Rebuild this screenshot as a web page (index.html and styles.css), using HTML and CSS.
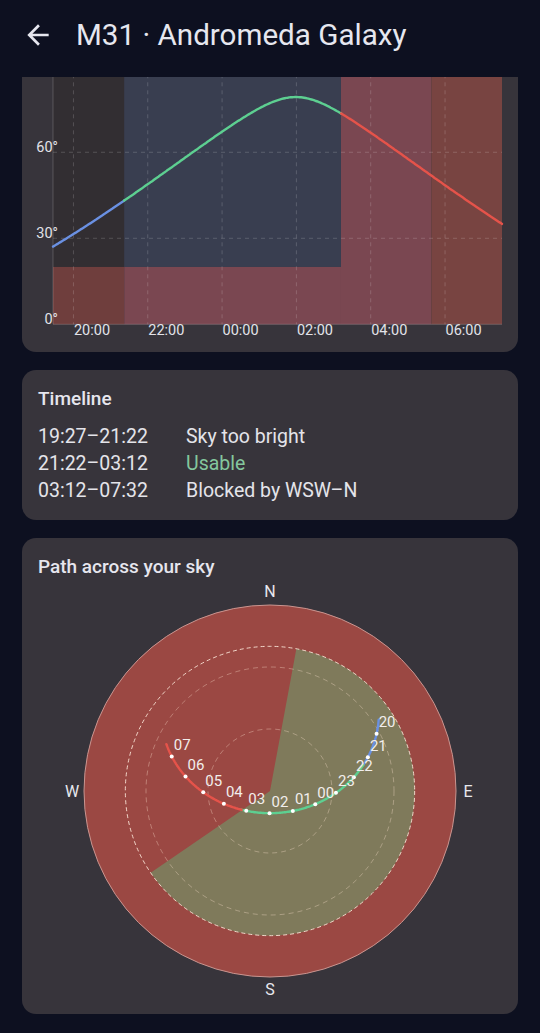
FILE: index.html
```html
<!DOCTYPE html>
<html lang="en">
<head>
  <meta charset="UTF-8">
  <meta name="viewport" content="width=device-width, initial-scale=1.0">
  <title>M31 · Andromeda Galaxy</title>
  <link rel="stylesheet" href="styles.css">
</head>
<body>
  <header class="topbar">
    <button class="back" aria-label="Back">
      <svg viewBox="0 0 24 24"><path d="M20 11H7.83l5.59-5.59L12 4l-8 8 8 8 1.41-1.41L7.83 13H20v-2z"/></svg>
    </button>
    <h1>M31 · Andromeda Galaxy</h1>
  </header>

  <main class="content">
    <div class="scroll">
      <!-- Altitude over the night -->
      <section class="card chart-card">
        <svg id="altChart" class="alt-chart" width="496" height="306" viewBox="0 0 496 306"></svg>
      </section>

      <!-- Timeline -->
      <section class="card">
        <h2>Timeline</h2>
        <div class="timeline">
          <span>19:27–21:22</span><span>Sky too bright</span>
          <span>21:22–03:12</span><span class="usable">Usable</span>
          <span>03:12–07:32</span><span>Blocked by WSW–N</span>
        </div>
      </section>

      <!-- Sky path -->
      <section class="card">
        <h2>Path across your sky</h2>
        <svg id="skyPlot" class="sky-plot" width="464" height="419" viewBox="0 0 464 419"></svg>
      </section>
    </div>
  </main>

  <script>
    const RAD = Math.PI / 180;
    const LAT = 52 * RAD;
    const DEC = 41.27 * RAD;
    const TRANSIT = 25.98;   // 01:59, hours counted from the evening's midnight
    const START = 19.45;     // 19:27
    const END = 31.533;      // 07:32
    const DARK = 21.367;     // 21:22
    const BLOCKED = 27.2;    // 03:12
    const DAWN = 29.633;     // 05:38

    const BLUE = '#6a90e2', GREEN = '#5dcf91', RED = '#e5534a';

    function position(t) {
      const h = (t - TRANSIT) * 15 * RAD;
      const sinAlt = Math.sin(LAT) * Math.sin(DEC) + Math.cos(LAT) * Math.cos(DEC) * Math.cos(h);
      const alt = Math.asin(sinAlt);
      let cosAz = (Math.sin(DEC) - sinAlt * Math.sin(LAT)) / (Math.cos(alt) * Math.cos(LAT));
      cosAz = Math.max(-1, Math.min(1, cosAz));
      let az = Math.acos(cosAz) / RAD;
      if (h > 0) az = 360 - az;
      return { alt: alt / RAD, az: az };
    }

    function segments(toXY) {
      const parts = [[START, DARK, BLUE], [DARK, BLOCKED, GREEN], [BLOCKED, END, RED]];
      return parts.map(([a, b, color]) => {
        const pts = [];
        for (let t = a; t < b; t += 0.04) pts.push(toXY(t));
        pts.push(toXY(b));
        const d = 'M' + pts.map(p => p[0].toFixed(1) + ' ' + p[1].toFixed(1)).join(' L');
        return `<path d="${d}" fill="none" stroke="${color}" stroke-width="2.4" stroke-linecap="round"/>`;
      }).join('');
    }

    // Altitude chart
    function drawChart() {
      const left = 31, right = 480, top = 20.3, bottom = 278.3;
      const x = t => left + (t - START) * (right - left) / (END - START);
      const y = alt => bottom - alt * 2.867;
      const band = y(20);
      let s = '';

      s += `<rect x="${left}" y="${top}" width="${x(DARK) - left}" height="${band - top}" fill="#322e32"/>`;
      s += `<rect x="${left}" y="${band}" width="${x(DARK) - left}" height="${bottom - band}" fill="#6f3e3d"/>`;
      s += `<rect x="${x(DARK)}" y="${top}" width="${x(BLOCKED) - x(DARK)}" height="${band - top}" fill="#393e50"/>`;
      s += `<rect x="${x(DARK)}" y="${band}" width="${x(BLOCKED) - x(DARK)}" height="${bottom - band}" fill="#7a4751"/>`;
      s += `<rect x="${x(BLOCKED)}" y="${top}" width="${x(DAWN) - x(BLOCKED)}" height="${bottom - top}" fill="#7a4751"/>`;
      s += `<rect x="${x(DAWN)}" y="${top}" width="${right - x(DAWN)}" height="${bottom - top}" fill="#784441"/>`;

      for (let t = 20; t <= 30; t += 2) {
        s += `<line class="grid" x1="${x(t)}" y1="${top}" x2="${x(t)}" y2="${bottom}"/>`;
        const label = String(t % 24).padStart(2, '0') + ':00';
        s += `<text class="tick" x="${x(t) + 0.5}" y="${bottom + 11}">${label}</text>`;
      }
      [30, 60, 90].forEach(a => {
        s += `<line class="grid" x1="${left}" y1="${y(a)}" x2="${right}" y2="${y(a)}"/>`;
      });
      s += `<line class="axis" x1="${left}" y1="${top}" x2="${left}" y2="${bottom}"/>`;
      s += `<line class="axis" x1="${left}" y1="${bottom}" x2="${right}" y2="${bottom}"/>`;
      [0, 30, 60].forEach(a => {
        s += `<text class="tick" x="36" y="${y(a) - 0.5}" text-anchor="end">${a}°</text>`;
      });

      s += segments(t => [x(t), y(position(t).alt)]);
      document.getElementById('altChart').innerHTML = s;
    }

    // Polar sky plot, north up, east right
    function drawSky() {
      const cx = 232, cy = 212, R = 186;
      const r = alt => R * (90 - alt) / 90;
      const pt = (az, rad) => [cx + rad * Math.sin(az * RAD), cy - rad * Math.cos(az * RAD)];
      const horizon = r(20);
      const a = pt(10.5, horizon), b = pt(235.6, horizon);
      let s = '';

      s += `<circle cx="${cx}" cy="${cy}" r="${R}" fill="#9b4843" stroke="#c99590" stroke-width="1"/>`;
      s += `<path d="M${cx} ${cy} L${a[0]} ${a[1]} A${horizon} ${horizon} 0 1 1 ${b[0]} ${b[1]} Z" fill="#7f7a5b"/>`;
      s += `<circle class="ring" cx="${cx}" cy="${cy}" r="${r(30)}"/>`;
      s += `<circle class="ring" cx="${cx}" cy="${cy}" r="${r(60)}"/>`;
      s += `<circle class="ring limit" cx="${cx}" cy="${cy}" r="${horizon}"/>`;

      s += segments(t => {
        const p = position(t);
        return pt(p.az, r(p.alt));
      });

      for (let h = 20; h <= 31; h++) {
        const p = position(h);
        const [px, py] = pt(p.az, r(p.alt));
        s += `<circle cx="${px}" cy="${py}" r="2" fill="#fff"/>`;
        s += `<text class="hour" x="${px + 10.5}" y="${py - 11.5}">${String(h % 24).padStart(2, '0')}</text>`;
      }

      s += `<text class="compass" x="${cx}" y="12">N</text>`;
      s += `<text class="compass" x="${cx}" y="410">S</text>`;
      s += `<text class="compass" x="34" y="${cy}">W</text>`;
      s += `<text class="compass" x="430" y="${cy}">E</text>`;
      document.getElementById('skyPlot').innerHTML = s;
    }

    drawChart();
    drawSky();
  </script>
</body>
</html>
```

FILE: styles.css
```css
body {
  margin: 0;
  background-color: #0d1020;
  color: #e6e7ef;
  font-family: Roboto, "Noto Sans", sans-serif;
}
.topbar {
  height: 77px;
  display: flex;
  align-items: flex-start;
  padding: 17px 0 0 22px;
  box-sizing: border-box;
}
.back {
  width: 32px;
  height: 32px;
  margin-top: 2px;
  padding: 0;
  border: 0;
  background: none;
}
.back svg {
  width: 32px;
  height: 32px;
  fill: #e6e7ef;
  display: block;
}
.topbar h1 {
  margin: 0 0 0 22px;
  font-size: 29.6px;
  line-height: 36px;
  font-weight: 400;
  color: #e6e7ef;
}
.content {
  height: calc(100vh - 77px);
  overflow: hidden;
}
.scroll {
  margin-top: -31px;
  padding: 0 22px;
  display: flex;
  flex-direction: column;
  gap: 18px;
}
.card {
  background-color: #37343b;
  border-radius: 14px;
  padding: 17px 16px 16px;
}
.card h2 {
  margin: 0;
  font-size: 19px;
  line-height: 24px;
  font-weight: 500;
  color: #e6e6ee;
}
.chart-card {
  padding: 0;
  height: 306px;
  overflow: hidden;
}
.alt-chart,
.sky-plot {
  display: block;
}
.timeline {
  display: grid;
  grid-template-columns: 148px auto;
  margin-top: 12px;
  font-size: 19.5px;
  line-height: 27px;
  color: #e4e4ea;
}
.usable {
  color: #84c79e;
}
.grid {
  stroke: rgba(255, 255, 255, 0.17);
  stroke-width: 1;
  stroke-dasharray: 4 4;
}
.axis {
  stroke: rgba(255, 255, 255, 0.18);
  stroke-width: 1;
}
.tick {
  fill: #e2e2e8;
  font-size: 14.5px;
}
.ring {
  fill: none;
  stroke: rgba(255, 228, 210, 0.35);
  stroke-width: 1;
  stroke-dasharray: 5 4;
}
.ring.limit {
  stroke: rgba(255, 236, 222, 0.85);
  stroke-dasharray: 4 3;
}
.hour {
  fill: #f2eeec;
  font-size: 15px;
  text-anchor: middle;
  dominant-baseline: central;
}
.compass {
  fill: #e8e8ee;
  font-size: 16px;
  text-anchor: middle;
  dominant-baseline: central;
}
```
